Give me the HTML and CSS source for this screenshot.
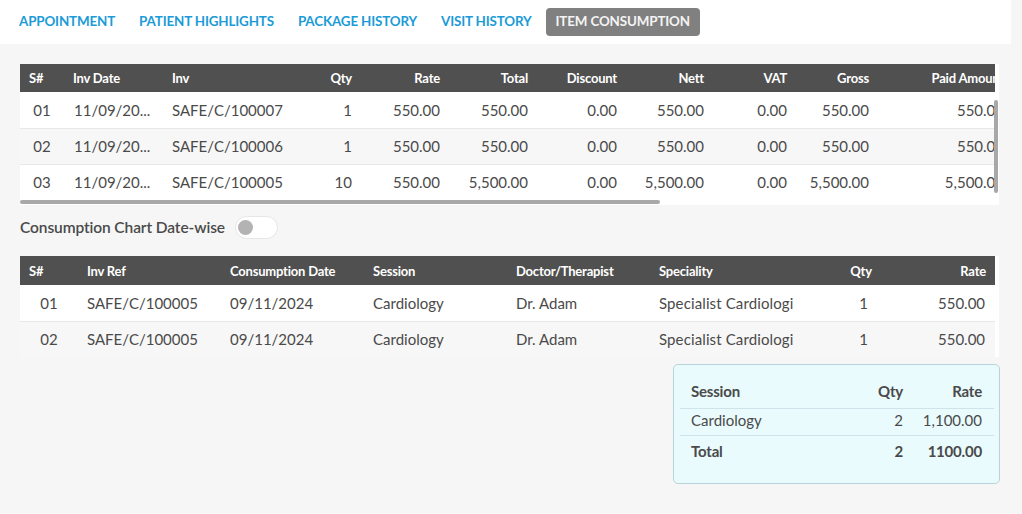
FILE: index.html
```html
<!DOCTYPE html>
<html lang="en">
<head>
<meta charset="utf-8">
<title>Item Consumption</title>
<link rel="stylesheet" href="styles.css">
</head>
<body>
<nav class="tabs">
  <a class="tab">APPOINTMENT</a>
  <a class="tab">PATIENT HIGHLIGHTS</a>
  <a class="tab">PACKAGE HISTORY</a>
  <a class="tab">VISIT HISTORY</a>
  <a class="tab tab-active">ITEM CONSUMPTION</a>
</nav>
<main class="content">
  <section class="grid grid-inv">
    <div class="grid-clip">
      <table class="data data-inv">
        <colgroup>
          <col class="w44"><col class="w99"><col class="w127"><col class="w71"><col class="w88"><col class="w88"><col class="w89"><col class="w87"><col class="w83"><col class="w82"><col class="w135"><col class="w120"><col class="w120"><col class="w255">
        </colgroup>
        <thead>
          <tr><th>S#</th><th>Inv Date</th><th>Inv</th><th class="r">Qty</th><th class="r">Rate</th><th class="r">Total</th><th class="r">Discount</th><th class="r">Nett</th><th class="r">VAT</th><th class="r">Gross</th><th class="r">Paid Amount</th><th class="r">Balance</th><th>Status</th><th></th></tr>
        </thead>
        <tbody>
          <tr><td class="c">01</td><td class="ell">11/09/20...</td><td>SAFE/C/100007</td><td class="r">1</td><td class="r">550.00</td><td class="r">550.00</td><td class="r">0.00</td><td class="r">550.00</td><td class="r">0.00</td><td class="r">550.00</td><td class="r">550.00</td><td class="r">0.00</td><td>Paid</td><td></td></tr>
          <tr><td class="c">02</td><td class="ell">11/09/20...</td><td>SAFE/C/100006</td><td class="r">1</td><td class="r">550.00</td><td class="r">550.00</td><td class="r">0.00</td><td class="r">550.00</td><td class="r">0.00</td><td class="r">550.00</td><td class="r">550.00</td><td class="r">0.00</td><td>Paid</td><td></td></tr>
          <tr><td class="c">03</td><td class="ell">11/09/20...</td><td>SAFE/C/100005</td><td class="r">10</td><td class="r">550.00</td><td class="r">5,500.00</td><td class="r">0.00</td><td class="r">5,500.00</td><td class="r">0.00</td><td class="r">5,500.00</td><td class="r">5,500.00</td><td class="r">0.00</td><td>Paid</td><td></td></tr>
        </tbody>
      </table>
    </div>
    <div class="hbar"><div class="hbar-thumb"></div></div>
    <div class="vbar"></div>
  </section>

  <div class="toggle-row">
    <span class="toggle-label">Consumption Chart Date-wise</span>
    <span class="switch"><span class="knob"></span></span>
  </div>

  <section class="grid grid-cons">
    <div class="grid-clip">
      <table class="data data-cons">
        <colgroup>
          <col class="w58"><col class="w143"><col class="w143"><col class="w143"><col class="w143"><col class="w143"><col class="w136"><col class="w66">
        </colgroup>
        <thead>
          <tr><th>S#</th><th>Inv Ref</th><th>Consumption Date</th><th>Session</th><th>Doctor/Therapist</th><th>Speciality</th><th class="c">Qty</th><th class="r">Rate</th></tr>
        </thead>
        <tbody>
          <tr><td class="c">01</td><td>SAFE/C/100005</td><td>09/11/2024</td><td>Cardiology</td><td>Dr. Adam</td><td class="clip">Specialist Cardiologist</td><td class="c qty">1</td><td class="r rate">550.00</td></tr>
          <tr><td class="c">02</td><td>SAFE/C/100005</td><td>09/11/2024</td><td>Cardiology</td><td>Dr. Adam</td><td class="clip">Specialist Cardiologist</td><td class="c qty">1</td><td class="r rate">550.00</td></tr>
        </tbody>
      </table>
    </div>
  </section>

  <div class="summary-row">
    <div class="summary">
      <table class="sum">
        <colgroup><col><col class="w60"><col class="w79"></colgroup>
        <thead>
          <tr><th>Session</th><th class="r">Qty</th><th class="r">Rate</th></tr>
        </thead>
        <tbody>
          <tr><td>Cardiology</td><td class="r">2</td><td class="r">1,100.00</td></tr>
        </tbody>
        <tfoot>
          <tr><td>Total</td><td class="r">2</td><td class="r">1100.00</td></tr>
        </tfoot>
      </table>
    </div>
  </div>
</main>
</body>
</html>
```

FILE: styles.css
```css
* { box-sizing: border-box; }
html, body { margin: 0; padding: 0; }
body {
  background: #f6f6f6;
  font-family: Lato, "Open Sans", "Liberation Sans", sans-serif;
  color: #4a4a4a;
  width: 1022px;
  height: 514px;
  overflow: hidden;
}

/* Tabs */
.tabs {
  width: 1011px;
  height: 44px;
  background: #ffffff;
  display: flex;
  align-items: center;
  gap: 4px;
  padding-left: 9px;
}
.tab {
  display: flex;
  align-items: center;
  height: 28px;
  padding: 0 10px 2px;
  font-size: 13.4px;
  font-weight: 700;
  color: #1b9bd7;
  letter-spacing: -0.15px;
  border-radius: 4px;
  white-space: nowrap;
}
.tab-active {
  background: #808080;
  color: #f4f4f4;
}

/* Content */
.content {
  padding: 20px 0 0 20px;
  width: 1022px;
}

.grid {
  position: relative;
  width: 979px;
  background: #ffffff;
}
.grid-clip {
  width: 975px;
  overflow: hidden;
}
.data {
  border-collapse: collapse;
  table-layout: fixed;
}
.data-inv { width: 1488px; }
.data-cons { width: 975px; }

.data th {
  background: #505050;
  color: #ffffff;
  font-size: 13px;
  font-weight: 700;
  text-align: left;
  height: 28px;
  padding: 0 9px;
  white-space: nowrap;
  overflow: hidden;
  letter-spacing: -0.2px;
}
.data-cons th { height: 29px; }
.data td {
  font-size: 15px;
  height: 36px;
  padding: 0 9px;
  white-space: nowrap;
  overflow: hidden;
  color: #4a4a4a;
}
.data tbody tr + tr td { border-top: 1px solid #e8e8e8; }
.data tbody tr:nth-child(even) td { background: #f7f7f7; }
.data .r { text-align: right; }
.data .c { text-align: center; }
.data td.ell { padding-left: 10px; }
.data td.clip { text-overflow: clip; padding-right: 1px; letter-spacing: 0.12px; }
.data td.qty { padding-left: 14px; }
.data td.rate { padding-right: 11px; }

.w44 { width: 44px; } .w58 { width: 58px; } .w60 { width: 60px; }
.w66 { width: 66px; } .w71 { width: 71px; } .w79 { width: 79px; }
.w82 { width: 82px; } .w83 { width: 83px; } .w87 { width: 87px; }
.w88 { width: 88px; } .w89 { width: 89px; } .w99 { width: 99px; }
.w120 { width: 120px; } .w127 { width: 127px; } .w135 { width: 135px; }
.w136 { width: 136px; } .w143 { width: 143px; } .w255 { width: 255px; }

/* scrollbars */
.hbar {
  height: 5px;
  width: 975px;
}
.hbar-thumb {
  width: 640px;
  height: 4px;
  background: #a8a8a8;
  border-radius: 3px;
}
.vbar {
  position: absolute;
  right: 1px;
  top: 36px;
  width: 4px;
  height: 93px;
  background: #a8a8a8;
  border-radius: 3px;
}

/* toggle */
.toggle-row {
  display: flex;
  align-items: center;
  gap: 10px;
  margin-top: 11px;
  height: 23px;
}
.toggle-label {
  font-size: 15.5px;
  font-weight: 600;
  color: #4a4a4a;
  letter-spacing: -0.1px;
  padding-bottom: 1px;
}
.switch {
  width: 43px;
  height: 23px;
  border-radius: 12px;
  background: #ffffff;
  border: 1px solid #e6e6e6;
  display: flex;
  align-items: center;
  padding-left: 2px;
}
.knob {
  width: 15px;
  height: 15px;
  border-radius: 50%;
  background: #b3b3b3;
}

.grid-cons { margin-top: 17px; }

/* summary */
.summary-row {
  width: 980px;
  display: flex;
  justify-content: flex-end;
  margin-top: 7px;
}
.summary {
  width: 327px;
  height: 120px;
  background: #e9fbfd;
  border: 1px solid #b8d3dc;
  border-radius: 5px;
  padding: 9px 5px 0 6px;
}
.sum {
  width: 100%;
  border-collapse: collapse;
  table-layout: fixed;
  font-size: 15px;
  color: #4a4a4a;
}
.sum th, .sum td {
  padding: 0 12px 0 11px;
  text-align: left;
}
.sum .r { text-align: right; padding-left: 0; }
.sum thead th {
  font-weight: 700;
  height: 34px;
  border-bottom: 1px solid #cfe4ea;
  letter-spacing: -0.2px;
}
.sum tbody td {
  height: 27px;
  padding-bottom: 3px;
  font-weight: 400;
  border-bottom: 1px solid #cfe4ea;
}
.sum tfoot td {
  height: 32px;
  font-weight: 700;
  letter-spacing: -0.2px;
}
```
